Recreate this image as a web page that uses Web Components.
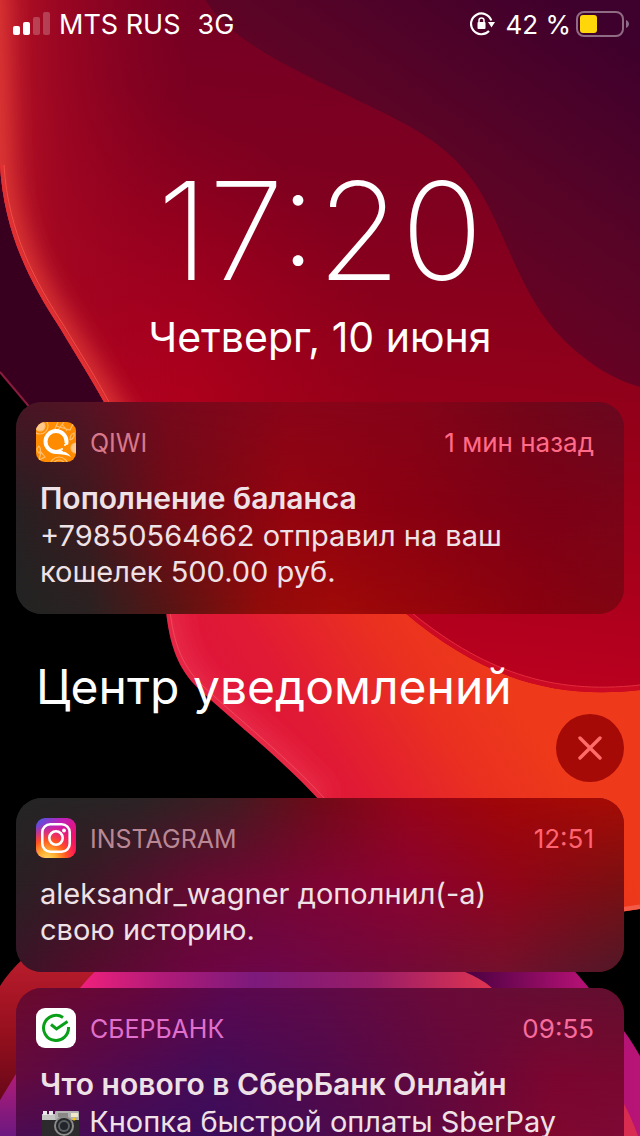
<!DOCTYPE html>
<html lang="ru">
<head>
<meta charset="utf-8">
<meta name="viewport" content="width=device-width, initial-scale=1">
<title>Экран блокировки</title>
<style>
  body { margin: 0; background: #000; color: #fff; font-family: Inter, "Liberation Sans", sans-serif; }
</style>
</head>
<body>
<lock-screen>
  <status-bar slot="status" carrier="MTS RUS" network="3G" battery="42 %"></status-bar>
  <lock-clock time="17:20" date="Четверг, 10 июня"></lock-clock>
  <notification-card app="QIWI" when="1 мин назад" heading="Пополнение баланса" tone="qiwi">
    <app-icon slot="icon" name="qiwi"></app-icon>
    +79850564662 отправил на ваш кошелек 500.00 руб.
  </notification-card>
  <center-header>Центр уведомлений</center-header>
  <notification-card app="INSTAGRAM" when="12:51" tone="instagram">
    <app-icon slot="icon" name="instagram"></app-icon>
    aleksandr_wagner дополнил(-а) свою историю.
  </notification-card>
  <notification-card app="СБЕРБАНК" when="09:55" heading="Что нового в СберБанк Онлайн" tone="sber">
    <app-icon slot="icon" name="sber"></app-icon>
    <app-icon name="camera"></app-icon> Кнопка быстрой оплаты SberPay
  </notification-card>
</lock-screen>

<script>
const define = (name, render) => customElements.define(name, class extends HTMLElement {
  connectedCallback() {
    if (this.shadowRoot) return;
    this.attachShadow({ mode: "open" }).innerHTML = render(this);
  }
});

define("wall-paper", () => `
<style>
  :host { display: block; overflow: hidden; }
  svg { display: block; width: 100%; height: 100%; }
</style>
<svg viewBox="0 0 640 1136" preserveAspectRatio="xMidYMin slice" aria-hidden="true">
  <defs>
    <linearGradient id="red" x1="420" y1="0" x2="340" y2="690" gradientUnits="userSpaceOnUse">
      <stop offset="0" stop-color="#740024"/><stop offset=".3" stop-color="#80001f"/>
      <stop offset=".6" stop-color="#960018"/><stop offset="1" stop-color="#be0020"/>
    </linearGradient>
    <radialGradient id="glow" cx="60" cy="420" r="340" gradientUnits="userSpaceOnUse">
      <stop offset="0" stop-color="#d00024" stop-opacity=".8"/><stop offset="1" stop-color="#b0001c" stop-opacity="0"/>
    </radialGradient>
    <linearGradient id="side" x1="0" y1="0" x2="190" y2="0" gradientUnits="userSpaceOnUse">
      <stop offset="0" stop-color="#b81426"/><stop offset=".3" stop-color="#a40822" stop-opacity=".8"/><stop offset="1" stop-color="#900020" stop-opacity="0"/>
    </linearGradient>
    <linearGradient id="plum" x1="380" y1="330" x2="600" y2="20" gradientUnits="userSpaceOnUse">
      <stop offset="0" stop-color="#720020"/><stop offset=".5" stop-color="#5a0426"/><stop offset="1" stop-color="#3e002c"/>
    </linearGradient>
    <linearGradient id="orange" x1="215" y1="800" x2="470" y2="630" gradientUnits="userSpaceOnUse">
      <stop offset="0" stop-color="#de1040"/><stop offset=".4" stop-color="#e01a34"/>
      <stop offset=".75" stop-color="#ea3020"/><stop offset="1" stop-color="#ee3a1a"/>
    </linearGradient>
    <linearGradient id="rose" x1="80" y1="0" x2="495" y2="0" gradientUnits="userSpaceOnUse">
      <stop offset="0" stop-color="#f0207c"/><stop offset=".2" stop-color="#b01a78"/><stop offset=".42" stop-color="#7c1a7c"/>
      <stop offset=".7" stop-color="#981c68"/><stop offset="1" stop-color="#e03450"/>
    </linearGradient>
    <linearGradient id="magenta" x1="465" y1="0" x2="640" y2="0" gradientUnits="userSpaceOnUse">
      <stop offset="0" stop-color="#4a0040"/><stop offset=".3" stop-color="#780858"/><stop offset=".65" stop-color="#b01072"/><stop offset="1" stop-color="#b81478"/>
    </linearGradient>
    <linearGradient id="ember" x1="0" y1="960" x2="0" y2="1100" gradientUnits="userSpaceOnUse">
      <stop offset="0" stop-color="#b81c2c"/><stop offset=".5" stop-color="#98101e"/><stop offset="1" stop-color="#680818"/>
    </linearGradient>
    <linearGradient id="violet" x1="0" y1="1075" x2="0" y2="1136" gradientUnits="userSpaceOnUse">
      <stop offset="0" stop-color="#b01c78"/><stop offset="1" stop-color="#6c1880"/>
    </linearGradient>
    <filter id="soft" x="-30%" y="-20%" width="160%" height="140%"><feGaussianBlur stdDeviation="12"/></filter>
    <path id="main" d="M0 0H640V690C550 700 480 676 404 612L300 560L105 404C92 380 78 358 60 328C32 285 4 235 0 165Z"/>
    <path id="blob" d="M165 600C168 640 176 668 200 690C240 727 285 762 322 803L500 930L640 909V560H166Z"/>
    <clipPath id="inMain"><use href="#main"/></clipPath>
    <clipPath id="inBlob"><use href="#blob"/></clipPath>
  </defs>
  <rect width="640" height="1136"/>
  <path d="M0 165L120 420H38C26 404 14 391 0 374Z" fill="#38001e"/>
  <path d="M0 372C14 389 26 402 38 418" fill="none" stroke="#8a1c3c" stroke-width="2"/>
  <use href="#blob" fill="url(#orange)"/>
  <g clip-path="url(#inBlob)" fill="none">
    <path d="M165 600C168 640 176 668 200 690C240 727 285 762 322 803" stroke="#f03a54" stroke-opacity=".6" stroke-width="26" filter="url(#soft)"/>
    <path d="M169 600C172 638 180 665 204 687C244 724 289 759 326 800" stroke="#f4626c" stroke-opacity=".6" stroke-width="1"/>
    <path d="M500 928L640 907" stroke="#f45a48" stroke-width="5"/>
  </g>
  <use href="#main" fill="url(#red)"/>
  <g clip-path="url(#inMain)">
    <rect width="640" height="700" fill="url(#glow)"/>
    <rect width="200" height="420" fill="url(#side)"/>
    <path d="M200 -10C222 40 300 72 359 101C405 123 448 142 478 188C510 240 520 300 570 346C592 366 615 380 640 387V-10Z" fill="url(#plum)"/>
    <path d="M-10 -20L-4 165C0 235 28 285 56 328C74 358 88 380 121 434" fill="none" stroke="#f0483a" stroke-width="34" stroke-opacity=".7" filter="url(#soft)"/>
    <path d="M0 165C4 235 32 285 60 328C78 358 92 380 105 404" fill="none" stroke="#e03034" stroke-width="6"/>
    <path d="M4 165C8 233 36 283 64 326C82 356 96 378 109 402" fill="none" stroke="#f44c46" stroke-width="1"/>
    <path d="M404 612C480 676 550 700 640 690" fill="none" stroke="#cc0a24" stroke-width="10"/>
    <path d="M407 609C482 671 551 695 640 685" fill="none" stroke="#e02c3c" stroke-width="1"/>
  </g>
  <path d="M0 986C6 976 14 967 24 958L120 950V1077H16L0 1100Z" fill="url(#ember)"/>
  <path d="M0 1100L16 1074H30V1136H0Z" fill="url(#violet)"/>
  <path d="M440 950H556C570 966 580 977 589 988C604 1005 613 1016 624 1031C630 1039 635 1047 640 1056V1136H440Z" fill="url(#magenta)"/>
  <path d="M618 1094C627 1108 633 1122 638 1136H618Z" fill="#d82c50"/>
  <path d="M112 955C98 968 90 976 80 988V1010H520L492 988C484 981 475 976 465 972L440 955Z" fill="url(#rose)"/>
</svg>`);

define("lock-screen", () => `
<style>
  :host { display: block; position: relative; height: 100vh; overflow: hidden; }
  wall-paper { position: absolute; inset: 0; }
  main { position: relative; display: flex; flex-direction: column; gap: 16px; padding: 0 16px; }
</style>
<wall-paper></wall-paper>
<slot name="status"></slot>
<main><slot></slot></main>`);

define("status-bar", el => `
<style>
  :host { display: flex; position: relative; align-items: center; justify-content: space-between; height: 48px; padding: 0 11px 0 13px; font-size: 27px; line-height: 32px; }
  div { display: flex; align-items: center; }
  span { padding-top: 2px; }
  .left { gap: 9px; }
  .net { margin-left: 8px; }
  .right { gap: 5px; font-size: 26px; }
  .lock { margin-right: 5px; }
  svg { display: block; }
</style>
<div class="left">
  <svg width="37" height="24" viewBox="0 0 37 24" fill="#fff" role="img" aria-label="Сигнал">
    <rect y="14" width="7" height="9" rx="2"/><rect x="10" y="10" width="7" height="13" rx="2"/>
    <g opacity=".22"><rect x="20" y="5" width="7" height="18" rx="2"/><rect x="30" width="7" height="23" rx="2"/></g>
  </svg>
  <span>${el.getAttribute("carrier")}</span>
  <span class="net">${el.getAttribute("network")}</span>
</div>
<div class="right">
  <svg class="lock" width="26" height="24" viewBox="0 0 26 24" role="img" aria-label="Блокировка поворота">
    <path d="M21.300 8.500A10.400 10.400 0 1 0 19 19" fill="none" stroke="#fff" stroke-width="2.200"/>
    <path d="M18 10H25L21.500 15.500Z" fill="#fff"/>
    <rect x="7.500" y="10" width="8" height="7" rx="1" fill="#fff"/>
    <path d="M9 10.500V8.500a2.500 2.500 0 0 1 5 0V10.500" fill="none" stroke="#fff" stroke-width="1.500"/>
  </svg>
  <span>${el.getAttribute("battery")}</span>
  <svg width="53" height="26" viewBox="0 0 53 26" role="img" aria-label="Аккумулятор">
    <rect x="1" y="1" width="46" height="24" rx="7" fill="none" stroke="#fff" stroke-opacity=".42" stroke-width="2"/>
    <rect x="4" y="4" width="17" height="18" rx="3" fill="#ffd60a"/>
    <path d="M50 9C54 11 54 15 50 17Z" fill="#fff" fill-opacity=".42"/>
  </svg>
</div>`);

define("lock-clock", el => `
<style>
  :host { display: flex; flex-direction: column; align-items: center; padding: 101px 0 25px; }
  .time { font-size: 136px; line-height: 164px; font-weight: 250; }
  .date { font-size: 41px; line-height: 48px; }
</style>
<time class="time">${el.getAttribute("time")}</time>
<time class="date">${el.getAttribute("date")}</time>`);

define("center-header", () => `
<style>
  :host { display: flex; flex-direction: column; padding: 28px 0 0; }
  h1 { margin: 0; padding: 2px 20px 0; font-size: 48px; line-height: 54px; font-weight: 400; }
  button { align-self: flex-end; display: grid; place-items: center; width: 68px; height: 68px; padding: 0; border: 0; border-radius: 50%; background: #a60a06; color: #ff6c6a; }
</style>
<h1><slot></slot></h1>
<button type="button" aria-label="Очистить">
  <svg width="24" height="24" viewBox="0 0 24 24" fill="none" stroke="currentColor" stroke-width="3.400" stroke-linecap="round"><path d="M2 2L22 22M22 2L2 22"/></svg>
</button>`);

define("notification-card", el => {
  const heading = el.getAttribute("heading");
  return `
<style>
  :host { display: block; position: relative; isolation: isolate; overflow: hidden; border-radius: 26px; padding: 20px 30px 24px 20px; background: linear-gradient(90deg, var(--mid)); }
  :host([tone="qiwi"]) {
    --top: #481524, #521425 10%, #75091c 25%, #890418 45%, #850318 65%, #720519 85%, #680820;
    --mid: #262022, #3e191e 12%, #720a15 25%, #94040f 45%, #8a0012 65%, #7d0016 85%, #7a0418;
    --low: #222423, #2a2222 12%, #561514 25%, #900c0a 40%, #a00a08 52%, #95040b 70%, #8a000f 85%, #800512;
    --label: #d8788c; --when: #ff6b88;
  }
  :host([tone="instagram"]) {
    --top: #242524, #2a2324 20%, #401c22 35%, #700a18 50%, #960418 65%, #a00608 80%, #a60c05;
    --mid: #2a2024, #3b1825 12%, #650a30 30%, #7e0534 50%, #8b0330 65%, #900518 82%, #7a1012;
    --low: #3a1426, #540c2c 12%, #6c0540 30%, #6d0648 42%, #72083a 60%, #74102c 80%, #501828;
    --label: #b98894; --when: #ff6470;
  }
  :host([tone="sber"]) {
    --top: #6a0a2c, #66063c 20%, #5a0850 35%, #5e0a48 50%, #6a0a38 70%, #620f2e;
    --mid: #640a3e, #500a50 18%, #440c58 32%, #500a4c 50%, #64083c 70%, #7a0630 88%, #78082f;
    --low: #400c5a, #380d5c 32%, #480c50 50%, #600840 70%, #80082e 88%, #800a38;
    --label: #e070cc; --when: #f66c9c;
  }
  :host::before, :host::after { content: ""; position: absolute; inset: 0; z-index: -1; }
  :host::before { background: linear-gradient(90deg, var(--top)); mask-image: linear-gradient(#000, transparent 50%); }
  :host::after { background: linear-gradient(90deg, var(--low)); mask-image: linear-gradient(transparent 50%, #000); }
  header { display: flex; align-items: center; gap: 14px; height: 40px; line-height: 38px; }
  .app, .when { padding-top: 2px; }
  .app { flex: 1; color: var(--label); font-size: 25px; }
  .when { color: var(--when); font-size: 26px; }
  .text { padding: 18px 34px 0 4px; color: #efe2e6; font-size: 29px; line-height: 36px; }
  h2 { margin: 0 0 2px; font-size: 30px; line-height: 36px; font-weight: 600; white-space: nowrap; }
  p { margin: 0; }
</style>
<header>
  <slot name="icon"></slot>
  <span class="app">${el.getAttribute("app")}</span>
  <time class="when">${el.getAttribute("when")}</time>
</header>
<div class="text">
  ${heading ? `<h2>${heading}</h2>` : ""}
  <p><slot></slot></p>
</div>`;
});

const icons = {
  qiwi: `
    <rect width="40" height="40" fill="#ff8c00"/>
    <g fill="none" stroke="#ffbe70" stroke-width="1.200">
      <circle cx="4" cy="4" r="5" fill="#ffc88c"/><circle cx="4" cy="4" r="8"/>
      <circle cx="40" cy="26" r="5" fill="#ffc88c"/><circle cx="23" cy="44" r="9"/><circle cx="23" cy="44" r="6"/>
      <path d="M18 9L22 0M22 8L28 0M20 4L34 8L38 0M26 2L31 9M3 24Q-1 28 3 31Q6 28 3 24M34 18Q34 12 38 11Q39 16 34 18M3 38L5 30L9 35L3 38"/>
    </g>
    <circle cx="20" cy="19.500" r="10.500" fill="#ff8c00" stroke="#fff" stroke-width="4"/>
    <path d="M20 31C25 28 31 29 35 35C31 32.500 26 32.500 20 32Z" fill="#fff"/>
    <path d="M24 25l3-2 1-3 2 3 4-1-2 5-4 3-3-2z" fill="#ff8c00"/><circle cx="26" cy="27" r="1" fill="#fff"/><circle cx="29" cy="23" r="1" fill="#fff"/>`,
  instagram: `
    <defs>
      <linearGradient id="a" x1="0" y1="0" x2="1" y2="1"><stop stop-color="#405de6"/><stop offset=".35" stop-color="#c020b8"/><stop offset=".7" stop-color="#f0106c"/><stop offset="1" stop-color="#ff0060"/></linearGradient>
      <radialGradient id="b" cx=".28" cy="1.05" r=".9"><stop stop-color="#ffdc6c"/><stop offset=".25" stop-color="#ffb030"/><stop offset=".55" stop-color="#ff5420"/><stop offset="1" stop-color="#ff2060" stop-opacity="0"/></radialGradient>
    </defs>
    <rect width="40" height="40" fill="url(#a)"/><rect width="40" height="40" fill="url(#b)"/>
    <g fill="none" stroke="#fff" stroke-width="2.600"><rect x="6.300" y="6.300" width="27.400" height="27.400" rx="8"/><circle cx="20" cy="20" r="6.700"/></g>
    <circle cx="28" cy="12.500" r="1.900" fill="#fff"/>`,
  sber: `
    <rect width="40" height="40" fill="#fff"/>
    <g fill="none" stroke="#0a9f18" stroke-width="3">
      <path d="M27 9.500A12.500 12.500 0 1 0 32.500 19"/><path d="M15 16.500L20.500 21L31.500 13.500"/>
    </g>`,
  camera: `
    <rect y="3" width="37" height="27" rx="2" fill="#2c2a2c"/><path d="M0 3h37v6H0z" fill="#c4c4c2"/>
    <path d="M1 0h4v4H1zM7 0h4v4H7z" fill="#e8e8e8"/>
    <rect x="13" width="24" height="9" rx="1" fill="#b4b2b0"/><rect x="16" y="2" width="10" height="4" fill="#8a8886"/><rect x="29" y="2" width="7" height="4" fill="#eee8c8"/>
    <circle cx="22" cy="15" r="10" fill="#8c8c8c"/><circle cx="22" cy="15" r="8" fill="#242628"/>
    <circle cx="22" cy="15" r="6" fill="#5c6064"/><circle cx="22" cy="15" r="4" fill="#22262a"/><circle cx="32" cy="8" r="1.500" fill="#ffc400"/>`
};
define("app-icon", el => {
  const name = el.getAttribute("name");
  const inline = name === "camera";
  return `
<style>
  :host { display: ${inline ? "inline-block" : "block"}; ${inline ? "padding: 0 2px; height: 25px; vertical-align: -4px; line-height: 0;" : ""} }
  svg { display: block; border-radius: ${inline ? 0 : 9}px; }
</style>
<svg width="${inline ? 37 : 40}" height="${inline ? 30 : 40}" viewBox="0 0 ${inline ? "37 30" : "40 40"}" aria-hidden="true">${icons[name]}</svg>`;
});
</script>
</body>
</html>
